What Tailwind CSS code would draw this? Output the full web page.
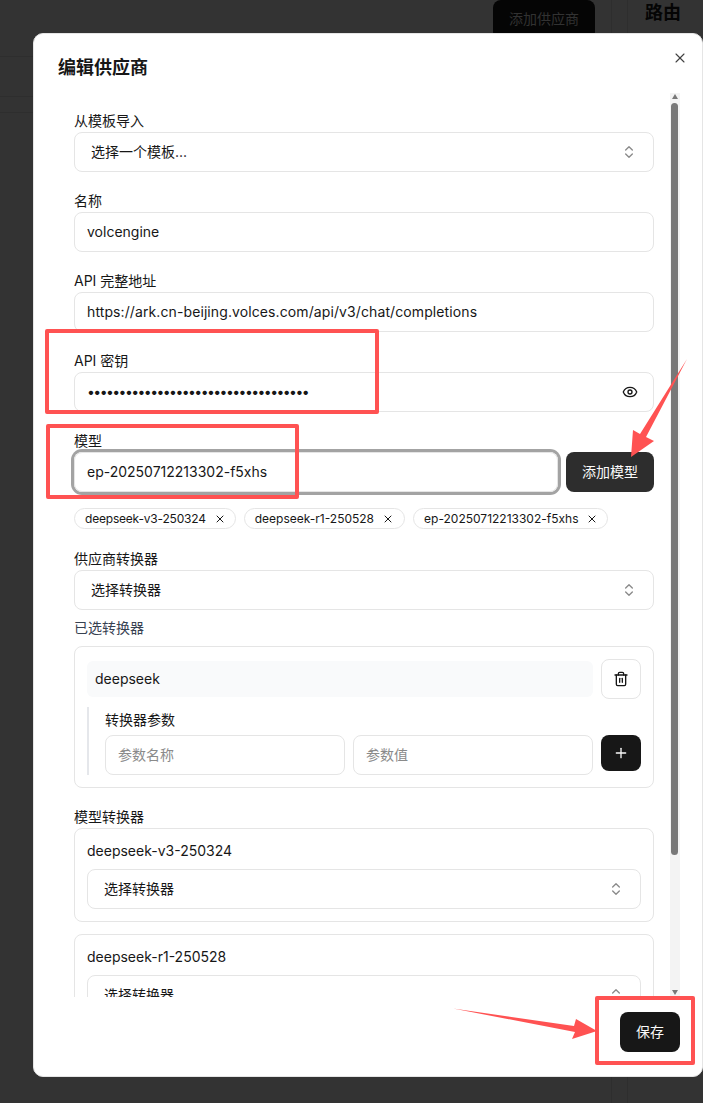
<!DOCTYPE html>
<html>
<head>
<meta charset="utf-8">
<script src="https://cdn.jsdelivr.net/npm/@tailwindcss/browser@4"></script>
</head>
<body class="m-0 bg-[#333333] font-['Inter','Noto_Sans_CJK_SC',sans-serif] text-[#171717]">
<div class="relative h-[1103px] w-[703px] overflow-hidden">

  <!-- dimmed page behind the dialog -->
  <div class="flex h-full">
    <div class="h-full w-[612px] border-r border-[#2e2e2e]">
      <div class="flex h-[57px] justify-end border-b border-[#2e2e2e] pr-4">
        <div class="flex h-10 w-[102px] items-center justify-center rounded-lg bg-[#050505] pb-[2px] text-sm text-[#323232]">添加供应商</div>
      </div>
      <div class="h-10 border-b border-[#2e2e2e]"></div>
      <div class="h-4 border-b border-[#2e2e2e]"></div>
    </div>
    <div class="h-full w-4 border-r border-[#2e2e2e]"></div>
    <div class="pl-[17px] text-lg leading-[26px] font-bold text-[#050505]">路由</div>
  </div>

  <!-- dialog -->
  <div class="absolute top-[33px] left-[33px] flex h-[1044px] w-[670px] flex-col rounded-[10px] border border-[#e5e5e5] bg-white">
    <button class="absolute top-4 right-[14px] text-[#404040]">
      <svg class="size-4" viewBox="0 0 24 24" fill="none" stroke="currentColor" stroke-width="1.6" stroke-linecap="round" stroke-linejoin="round"><path d="M18 6 6 18"/><path d="m6 6 12 12"/></svg>
    </button>
    <h2 class="mt-[21px] h-[26px] pl-6 text-lg leading-[26px] font-bold">编辑供应商</h2>

    <div class="relative mt-3 h-[904px] overflow-hidden">
      <!-- scrollbar -->
      <div class="absolute top-0 left-[636px] flex h-full w-[10px] flex-col items-center justify-between bg-[#f3f3f3]">
        <div class="mt-[1px] h-0 w-0 border-x-[3.5px] border-b-[5px] border-x-transparent border-b-[#787878]"></div>
        <div class="absolute top-[10px] left-[1px] h-[752px] w-[7px] rounded-full bg-[#787878]"></div>
        <div class="mb-[2px] h-0 w-0 border-x-[3.5px] border-t-[5px] border-x-transparent border-t-[#787878]"></div>
      </div>

      <div class="ml-10 w-[580px] pt-[19px]">
        <label class="block h-5 text-sm leading-[18px]">从模板导入</label>
        <div class="mb-5 flex h-10 items-center justify-between rounded-lg border border-[#e5e5e5] pr-4 pl-4 text-sm">
          <span>选择一个模板...</span>
          <svg class="size-4 text-[#8a8a8a]" viewBox="0 0 24 24" fill="none" stroke="currentColor" stroke-width="2" stroke-linecap="round" stroke-linejoin="round"><path d="m7 15 5 5 5-5"/><path d="m7 9 5-5 5 5"/></svg>
        </div>

        <label class="block h-5 text-sm leading-[18px]">名称</label>
        <input class="mb-5 block h-10 w-full rounded-lg border border-[#e5e5e5] px-3 pb-0.5 text-sm" value="volcengine">

        <label class="block h-5 text-sm leading-[18px]">API 完整地址</label>
        <input class="mb-5 block h-10 w-full rounded-lg border border-[#e5e5e5] px-3 pb-0.5 text-sm tracking-[0.1px]" value="https://ark.cn-beijing.volces.com/api/v3/chat/completions">

        <label class="block h-5 text-sm leading-[18px]">API 密钥</label>
        <div class="relative mb-5 h-10">
          <input type="password" class="block h-10 w-full rounded-lg border border-[#e5e5e5] px-3 pb-0.5 text-sm tracking-[-1.56px]" value="abcdefghijklmnopqrstuvwxyz012345678">
          <svg class="absolute top-3 right-4 size-4" viewBox="0 0 24 24" fill="none" stroke="currentColor" stroke-width="2" stroke-linecap="round" stroke-linejoin="round"><path d="M2.062 12.348a1 1 0 0 1 0-.696 10.75 10.75 0 0 1 19.876 0 1 1 0 0 1 0 .696 10.75 10.75 0 0 1-19.876 0"/><circle cx="12" cy="12" r="3"/></svg>
        </div>

        <label class="block h-5 text-sm leading-[18px]">模型</label>
        <div class="flex h-10 gap-2">
          <input class="block h-10 flex-1 rounded-lg border border-[#e5e5e5] px-3 pb-0.5 text-sm ring-[3px] ring-[#a3a3a3]" value="ep-20250712213302-f5xhs">
          <button class="h-10 w-[88px] rounded-lg bg-[#2d2d2d] text-sm text-[#fafafa]">添加模型</button>
        </div>
        <div class="mt-4 flex h-[21px] gap-2 text-xs text-[#171717]">
          <span class="flex items-center gap-2 rounded-full border border-[#e5e5e5] pr-[9px] pl-[10px] tracking-[-0.2px]">deepseek-v3-250324<svg class="size-3" viewBox="0 0 24 24" fill="none" stroke="currentColor" stroke-width="2" stroke-linecap="round"><path d="M18 6 6 18"/><path d="m6 6 12 12"/></svg></span>
          <span class="flex items-center gap-2 rounded-full border border-[#e5e5e5] pr-[10px] pl-[10px]">deepseek-r1-250528<svg class="size-3" viewBox="0 0 24 24" fill="none" stroke="currentColor" stroke-width="2" stroke-linecap="round"><path d="M18 6 6 18"/><path d="m6 6 12 12"/></svg></span>
          <span class="flex items-center gap-2 rounded-full border border-[#e5e5e5] pr-[9px] pl-[10px]">ep-20250712213302-f5xhs<svg class="size-3" viewBox="0 0 24 24" fill="none" stroke="currentColor" stroke-width="2" stroke-linecap="round"><path d="M18 6 6 18"/><path d="m6 6 12 12"/></svg></span>
        </div>

        <label class="mt-[19px] block h-[22px] text-sm leading-[22px]">供应商转换器</label>
        <div class="flex h-10 items-center justify-between rounded-lg border border-[#e5e5e5] pr-4 pl-4 text-sm">
          <span>选择转换器</span>
          <svg class="size-4 text-[#8a8a8a]" viewBox="0 0 24 24" fill="none" stroke="currentColor" stroke-width="2" stroke-linecap="round" stroke-linejoin="round"><path d="m7 15 5 5 5-5"/><path d="m7 9 5-5 5 5"/></svg>
        </div>

        <div class="mt-2 h-5 text-sm leading-5 text-[#374151]">已选转换器</div>
        <div class="mt-2 h-[142px] rounded-lg border border-[#e5e5e5] pt-[12px] pr-3 pl-3">
          <div class="flex gap-2">
            <div class="my-[2px] flex h-9 flex-1 items-center rounded-md bg-[#f9fafb] px-2 text-sm">deepseek</div>
            <button class="flex h-10 w-10 items-center justify-center rounded-lg border border-[#e5e5e5]">
              <svg class="size-4" viewBox="0 0 24 24" fill="none" stroke="currentColor" stroke-width="2" stroke-linecap="round" stroke-linejoin="round"><path d="M3 6h18"/><path d="M19 6v14c0 1-1 2-2 2H7c-1 0-2-1-2-2V6"/><path d="M8 6V4c0-1 1-2 2-2h4c1 0 2 1 2 2v2"/><line x1="10" x2="10" y1="11" y2="17"/><line x1="14" x2="14" y1="11" y2="17"/></svg>
            </button>
          </div>
          <div class="mt-2 border-l-2 border-[#e5e7eb] pl-4">
            <div class="h-7 pt-[3px] text-sm leading-5">转换器参数</div>
            <div class="flex gap-2">
              <input class="block h-10 w-[240px] rounded-lg border border-[#e5e5e5] px-3 pb-0.5 text-sm placeholder:text-[#8a8a8a]" placeholder="参数名称">
              <input class="block h-10 w-[240px] rounded-lg border border-[#e5e5e5] px-3 pb-0.5 text-sm placeholder:text-[#8a8a8a]" placeholder="参数值">
              <button class="flex h-9 w-10 items-center justify-center rounded-lg bg-[#171717] text-[#fafafa]">
                <svg class="size-4" viewBox="0 0 24 24" fill="none" stroke="currentColor" stroke-width="2" stroke-linecap="round"><path d="M5 12h14"/><path d="M12 5v14"/></svg>
              </button>
            </div>
          </div>
        </div>

        <label class="mt-[19px] block h-[21px] text-sm leading-5">模型转换器</label>
        <div class="h-[94px] rounded-lg border border-[#e5e5e5] px-3 pt-3">
          <div class="h-7 text-sm leading-5">deepseek-v3-250324</div>
          <div class="flex h-10 items-center justify-between rounded-lg border border-[#e5e5e5] pr-4 pl-4 text-sm">
            <span>选择转换器</span>
            <svg class="size-4 text-[#8a8a8a]" viewBox="0 0 24 24" fill="none" stroke="currentColor" stroke-width="2" stroke-linecap="round" stroke-linejoin="round"><path d="m7 15 5 5 5-5"/><path d="m7 9 5-5 5 5"/></svg>
          </div>
        </div>
        <div class="mt-3 h-[94px] rounded-lg border border-[#e5e5e5] px-3 pt-3">
          <div class="h-7 text-sm leading-5">deepseek-r1-250528</div>
          <div class="flex h-10 items-center justify-between rounded-lg border border-[#e5e5e5] pr-4 pl-4 text-sm">
            <span>选择转换器</span>
            <svg class="size-4 text-[#8a8a8a]" viewBox="0 0 24 24" fill="none" stroke="currentColor" stroke-width="2" stroke-linecap="round" stroke-linejoin="round"><path d="m7 15 5 5 5-5"/><path d="m7 9 5-5 5 5"/></svg>
          </div>
        </div>
      </div>
    </div>

    <div class="flex justify-end pt-[15px] pr-[22px]">
      <button class="h-10 w-[60px] rounded-lg bg-[#171717] text-sm text-[#fafafa]">保存</button>
    </div>
  </div>

  <!-- red annotations on top of the screenshot -->
  <div class="absolute top-[329px] left-[45px] h-[85px] w-[334px] rounded-[2px] border-4 border-[#ff5252]"></div>
  <div class="absolute top-[424px] left-[46px] h-[75px] w-[253px] rounded-[2px] border-4 border-[#ff5252]"></div>
  <div class="absolute top-[996px] left-[595px] h-[69px] w-[100px] rounded-[2px] border-4 border-[#ff5252]"></div>
  <svg class="absolute top-0 left-0" width="703" height="1103" viewBox="0 0 703 1103">
    <polygon fill="#ff5252" points="687,359 646,437 654,441 631,457 633,430 640,434"/>
    <polygon fill="#ff5252" points="453,1008.5 574,1026 576,1019 597,1031 572,1039 575,1032"/>
  </svg>
</div>
</body>
</html>
